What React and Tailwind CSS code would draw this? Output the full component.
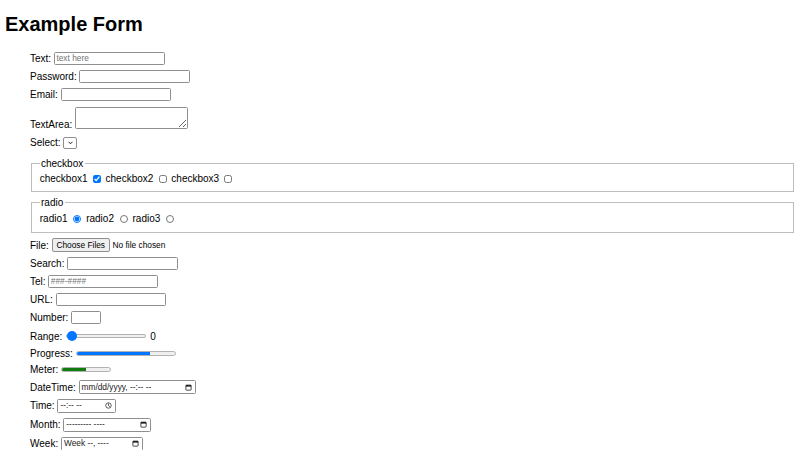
import React from "react";

const field =
  "h-[13px] border border-[#8f8f8f] rounded-[1.5px] bg-white px-[1.5px] text-[8.33px] outline-none placeholder:text-[#757575]";

function Row({ label, children, className = "h-[18px]" }) {
  return (
    <div className={`flex items-center gap-[2.78px] ${className}`}>
      <span>{label}</span>
      {children}
    </div>
  );
}

function CalendarIcon() {
  return (
    <svg viewBox="0 0 16 16" className="w-[7px] h-[7px]" fill="none" stroke="currentColor">
      <rect x="2" y="2.5" width="12" height="11.5" rx="1.2" strokeWidth="1.8" />
      <rect x="2" y="2.5" width="12" height="3.5" fill="currentColor" stroke="none" />
    </svg>
  );
}

function ClockIcon() {
  return (
    <svg viewBox="0 0 16 16" className="w-[7px] h-[7px]" fill="none" stroke="currentColor" strokeWidth="1.6">
      <circle cx="8" cy="8" r="6.2" />
      <path d="M8 4.2V8l2.6 2.2" strokeLinecap="round" />
    </svg>
  );
}

// fake date/time input: text + picker glyph on the right
function DateBox({ width, text, icon }) {
  return (
    <div
      className={`${width} h-[14px] flex items-center justify-between border border-[#8f8f8f] rounded-[1.5px] bg-white pl-[2px] pr-[3px] text-[8.33px] text-[#1a1a1a]`}
    >
      <span className="leading-none whitespace-pre">{text}</span>
      {icon}
    </div>
  );
}

export default function App() {
  return (
    <div className="min-h-screen bg-white px-[5px] text-[10px] text-black font-['Liberation_Sans',Arial,sans-serif]">
      <h1 className="h-[49px] pt-[13px] text-[20px] font-bold leading-[23px]">Example Form</h1>

      <form className="flex flex-col pl-[25px]">
        <Row label="Text:">
          <input type="text" placeholder="text here" className={`${field} w-[111px]`} />
        </Row>
        <Row label="Password:">
          <input type="password" className={`${field} w-[111px]`} />
        </Row>
        <Row label="Email:">
          <input type="email" className={`${field} w-[110px]`} />
        </Row>
        <div className="flex h-[30px] items-end gap-[2.78px]">
          <span className="mb-[2px] leading-[12px]">TextArea:</span>
          <textarea className="mb-[4px] h-[22px] w-[113px] border border-[#8f8f8f] rounded-[1.5px] bg-white text-[8.33px] outline-none resize" />
        </div>
        <Row label="Select:" className="h-[19px]">
          <span className="flex h-[12px] w-[14px] items-center justify-center border border-[#8f8f8f] rounded-[2px] bg-white">
            <svg viewBox="0 0 10 6" className="w-[5px] h-[3.5px]" fill="none" stroke="black" strokeWidth="1.8">
              <path d="M1 1l4 4 4-4" />
            </svg>
          </span>
        </Row>

        <fieldset className="mx-[1.25px] mt-[6px] border border-[#bdbdbd] px-[7.5px] pt-[3.5px] pb-[6.25px]">
          <legend className="px-[1.25px] leading-[11.5px]">checkbox</legend>
          <div className="flex h-[11.5px] items-center">
            <span>checkbox1</span>
            <input type="checkbox" defaultChecked className="ml-[5.3px] mr-[4.7px] h-[8px] w-[8px]" />
            <span>checkbox2</span>
            <input type="checkbox" className="ml-[5.3px] mr-[4.7px] h-[8px] w-[8px]" />
            <span>checkbox3</span>
            <input type="checkbox" className="ml-[5.3px] mr-[4.7px] h-[8px] w-[8px]" />
          </div>
        </fieldset>

        <fieldset className="mx-[1.25px] mt-[5px] border border-[#bdbdbd] px-[7.5px] pt-[3.5px] pb-[6.25px]">
          <legend className="px-[1.25px] leading-[11.5px]">radio</legend>
          <div className="flex h-[14px] items-center">
            <span>radio1</span>
            <input type="radio" name="radio" defaultChecked className="ml-[5.9px] mr-[4.7px] h-[8px] w-[8px]" />
            <span>radio2</span>
            <input type="radio" name="radio" className="ml-[5.9px] mr-[4.7px] h-[8px] w-[8px]" />
            <span>radio3</span>
            <input type="radio" name="radio" className="ml-[5.9px] mr-[4.7px] h-[8px] w-[8px]" />
          </div>
        </fieldset>

        <Row label="File:" className="mt-[3px] h-[18px]">
          <span className="flex h-[14px] items-center border border-[#8f8f8f] rounded-[2px] bg-[#efefef] px-[3.75px] text-[8.33px]">
            Choose Files
          </span>
          <span className="text-[8.33px]">No file chosen</span>
        </Row>
        <Row label="Search:">
          <input type="search" className={`${field} w-[111px]`} />
        </Row>
        <Row label="Tel:">
          <input type="tel" placeholder="###-####" className={`${field} w-[110px]`} />
        </Row>
        <Row label="URL:">
          <input type="url" className={`${field} w-[110px]`} />
        </Row>
        <Row label="Number:">
          <input type="number" className={`${field} w-[30px]`} />
        </Row>
        <Row label="Range:" className="h-[20px]">
          <div className="relative mx-[1.25px] flex h-[10px] w-[80px] items-center">
            <div className="h-[4px] w-full rounded-full border border-[#b2b2b2] bg-[#efefef]" />
            <div className="absolute left-[0.5px] top-0 h-[10px] w-[10px] rounded-full bg-[#0075ff]" />
          </div>
          <span>0</span>
        </Row>
        <Row label="Progress:" className="h-[14px]">
          <div className="h-[5px] w-[100px] overflow-hidden rounded-full border border-[#b2b2b2] bg-[#efefef]">
            <div className="h-full w-[75%] bg-[#0075ff]" />
          </div>
        </Row>
        <Row label="Meter:" className="h-[18px]">
          <div className="h-[5px] w-[50px] overflow-hidden rounded-full border border-[#b2b2b2] bg-[#efefef]">
            <div className="h-full w-[50%] bg-[#107c10]" />
          </div>
        </Row>
        <Row label="DateTime:">
          <DateBox width="w-[117px]" text="mm/dd/yyyy, --:-- --" icon={<CalendarIcon />} />
        </Row>
        <Row label="Time:" className="h-[19px]">
          <DateBox width="w-[59px]" text="--:-- --" icon={<ClockIcon />} />
        </Row>
        <Row label="Month:" className="h-[19px]">
          <DateBox width="w-[88px]" text="--------- ----" icon={<CalendarIcon />} />
        </Row>
        <Row label="Week:" className="h-[19px]">
          <DateBox width="w-[82px]" text="Week --, ----" icon={<CalendarIcon />} />
        </Row>
      </form>
    </div>
  );
}
